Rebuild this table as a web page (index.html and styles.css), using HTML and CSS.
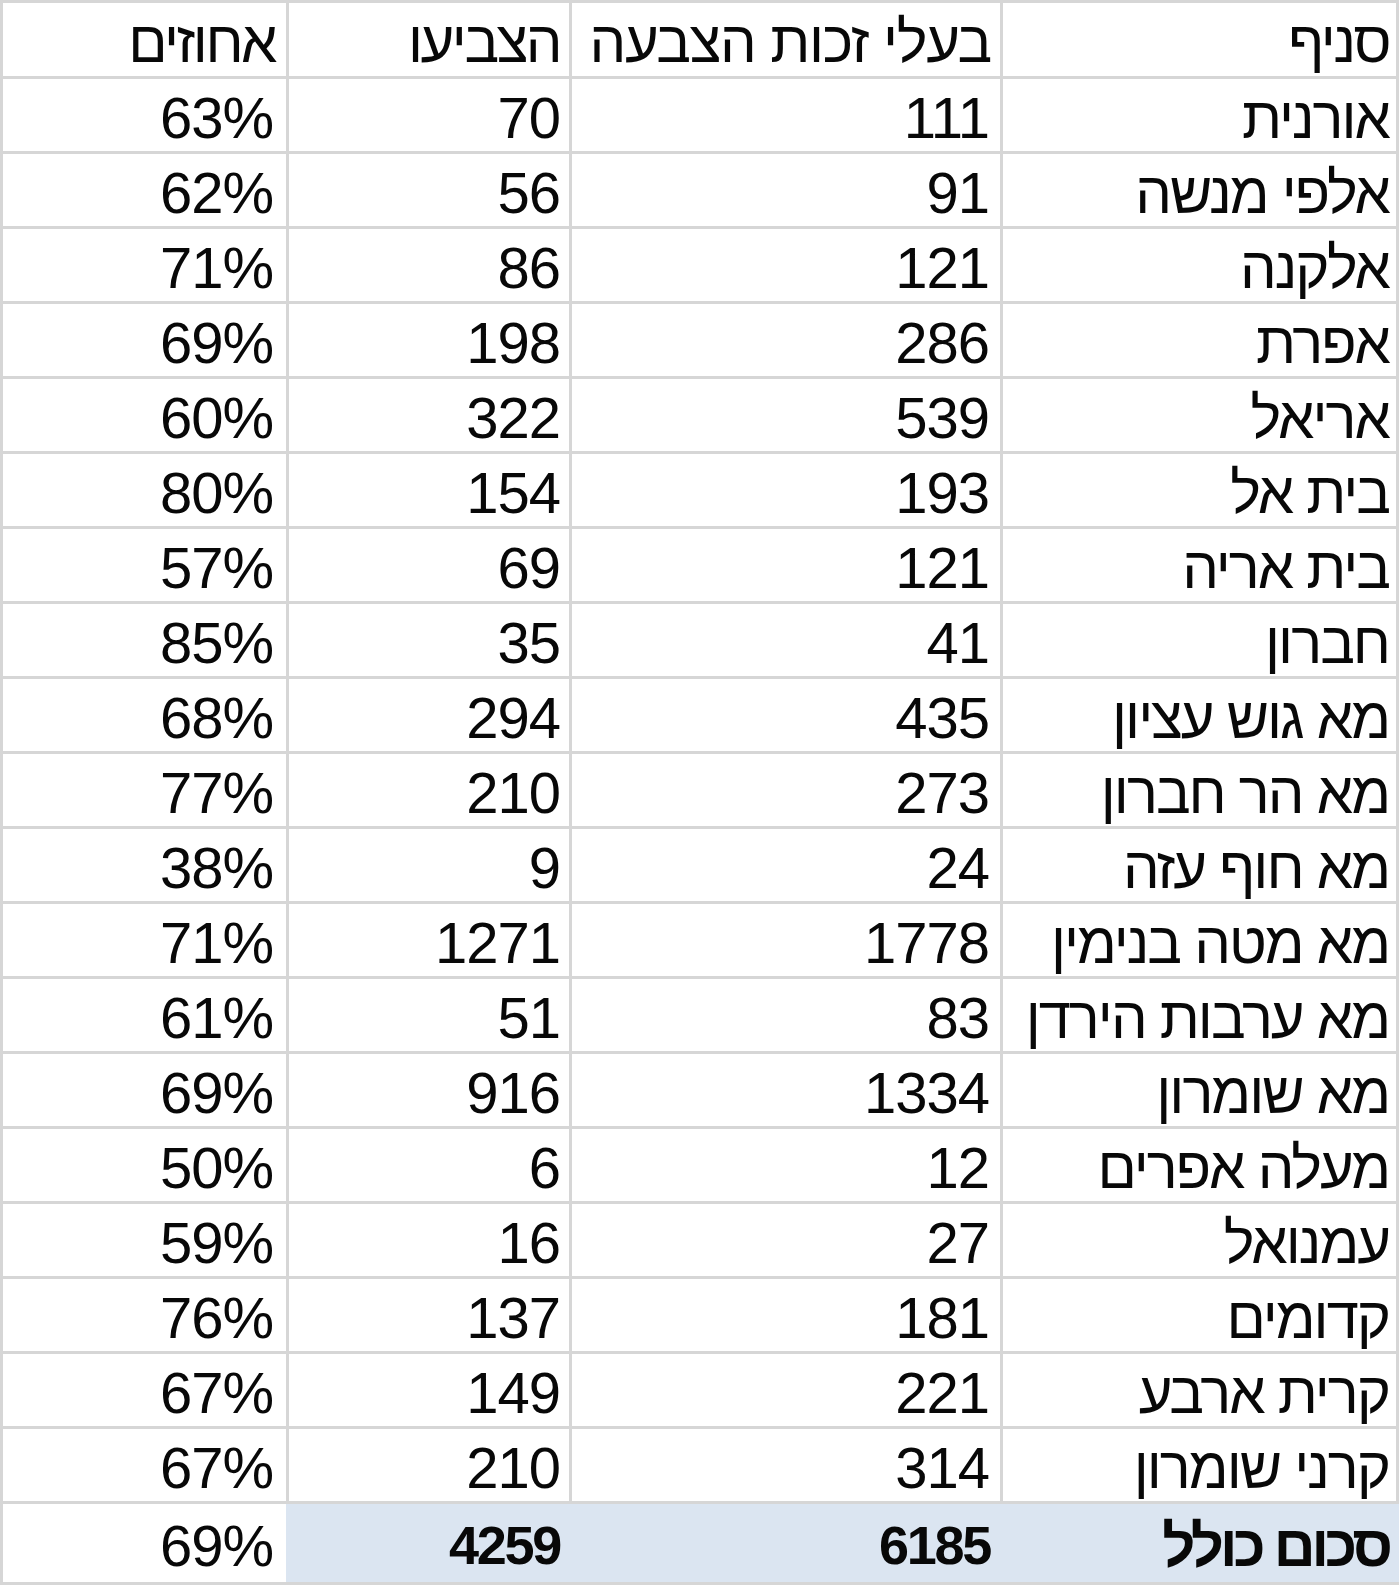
FILE: index.html
```html
<!DOCTYPE html>
<html lang="he" dir="rtl">
<head>
<meta charset="utf-8">
<title>סניפים</title>
<link rel="stylesheet" href="styles.css">
</head>
<body>
<table class="sheet">
  <colgroup>
    <col class="c-branch">
    <col class="c-eligible">
    <col class="c-voted">
    <col class="c-pct">
  </colgroup>
  <tbody>
    <tr class="row head"><td>סניף</td><td>בעלי זכות הצבעה</td><td>הצביעו</td><td>אחוזים</td></tr>
    <tr class="row"><td>אורנית</td><td>111</td><td>70</td><td>63%</td></tr>
    <tr class="row"><td>אלפי מנשה</td><td>91</td><td>56</td><td>62%</td></tr>
    <tr class="row"><td>אלקנה</td><td>121</td><td>86</td><td>71%</td></tr>
    <tr class="row"><td>אפרת</td><td>286</td><td>198</td><td>69%</td></tr>
    <tr class="row"><td>אריאל</td><td>539</td><td>322</td><td>60%</td></tr>
    <tr class="row"><td>בית אל</td><td>193</td><td>154</td><td>80%</td></tr>
    <tr class="row"><td>בית אריה</td><td>121</td><td>69</td><td>57%</td></tr>
    <tr class="row"><td>חברון</td><td>41</td><td>35</td><td>85%</td></tr>
    <tr class="row"><td>מא גוש עציון</td><td>435</td><td>294</td><td>68%</td></tr>
    <tr class="row"><td>מא הר חברון</td><td>273</td><td>210</td><td>77%</td></tr>
    <tr class="row"><td>מא חוף עזה</td><td>24</td><td>9</td><td>38%</td></tr>
    <tr class="row"><td>מא מטה בנימין</td><td>1778</td><td>1271</td><td>71%</td></tr>
    <tr class="row"><td>מא ערבות הירדן</td><td>83</td><td>51</td><td>61%</td></tr>
    <tr class="row"><td>מא שומרון</td><td>1334</td><td>916</td><td>69%</td></tr>
    <tr class="row"><td>מעלה אפרים</td><td>12</td><td>6</td><td>50%</td></tr>
    <tr class="row"><td>עמנואל</td><td>27</td><td>16</td><td>59%</td></tr>
    <tr class="row"><td>קדומים</td><td>181</td><td>137</td><td>76%</td></tr>
    <tr class="row"><td>קרית ארבע</td><td>221</td><td>149</td><td>67%</td></tr>
    <tr class="row"><td>קרני שומרון</td><td>314</td><td>210</td><td>67%</td></tr>
    <tr class="row total"><td class="tot label">סכום כולל</td><td class="tot sum">6185</td><td class="tot sum">4259</td><td>69%</td></tr>
  </tbody>
</table>
</body>
</html>
```

FILE: styles.css
```css
html, body {
  margin: 0;
  padding: 0;
  background: #ffffff;
}

.sheet {
  direction: rtl;
  table-layout: fixed;
  border-collapse: collapse;
  width: 1399px;
  margin: 0 auto 0 0;
  font-family: "Liberation Sans", Arial, "DejaVu Sans", sans-serif;
  font-size: 58px;
  color: #080808;
}

.c-branch { width: 396px; }
.c-eligible { width: 431px; }
.c-voted { width: 283px; }
.c-pct { width: 286px; }

.row {
  height: 75px;
}

.row.head {
  height: 76px;
}

.row td {
  border: 3px solid #d6d6d6;
  padding: 5px 0 0 0;
  text-align: right;
  vertical-align: middle;
  white-space: nowrap;
  overflow: hidden;
  line-height: 1.1;
  letter-spacing: -1px;
}

/* Hebrew labels are set tighter, as in the spreadsheet rendering */
.row td:first-child {
  letter-spacing: -2px;
}

.row.head td {
  letter-spacing: -2.5px;
}

.row.head td:nth-child(2) {
  letter-spacing: -1.3px;
}

.row td:nth-child(1) { padding-right: 7px; }
.row td:nth-child(2) { padding-right: 11px; }
.row td:nth-child(3) { padding-right: 9px; }
.row td:nth-child(4) { padding-right: 13px; }

.row.head td:nth-child(1) { padding-right: 7px; }
.row.head td:nth-child(2) { padding-right: 9px; }
.row.head td:nth-child(3) { padding-right: 9px; }
.row.head td:nth-child(4) { padding-right: 11px; }

.row.total {
  height: 81px;
}

.row.total td.tot {
  background: #dbe5f1;
  font-weight: bold;
  border-left-color: #dbe5f1;
  border-right-color: #dbe5f1;
  border-top-color: #aabcd3;
}

.row.total td.label {
  letter-spacing: -4px;
}

.row.total td.sum {
  font-size: 54px;
  letter-spacing: -2.3px;
}

.row.total td.sum:nth-child(2) { padding-right: 10px; }
.row.total td.sum:nth-child(3) { padding-right: 9px; }
```
